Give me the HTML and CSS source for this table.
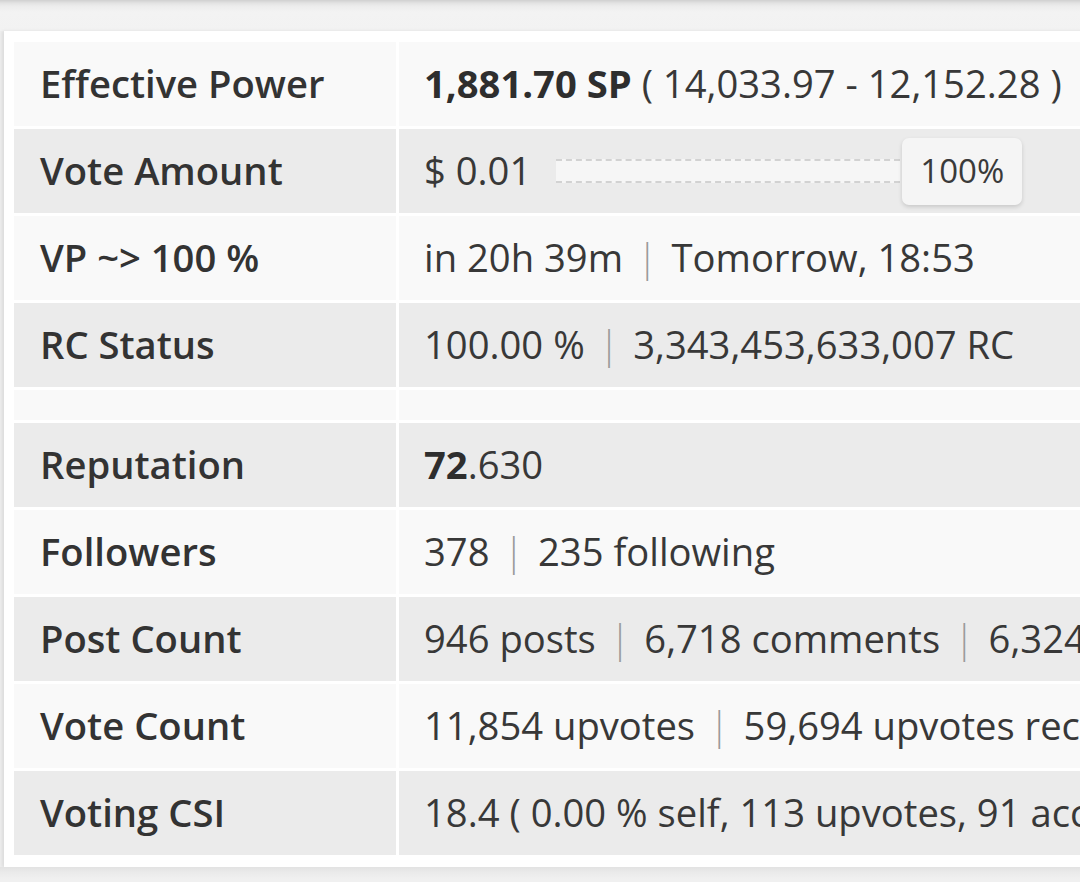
FILE: index.html
```html
<!DOCTYPE html>
<html>
<head>
<meta charset="utf-8">
<link rel="stylesheet" href="styles.css">
</head>
<body>
<div class="prev"></div>
<div class="card">
  <table class="stats">
    <tr><td class="label">Effective Power</td><td class="val"><b>1,881.70 SP</b> ( 14,033.97 - 12,152.28 )</td></tr>
    <tr><td class="label">Vote Amount</td><td class="val"><div class="vote"><span>$ 0.01</span><div class="slider"><div class="track"></div><div class="handle">100%</div></div></div></td></tr>
    <tr><td class="label">VP ~&gt; 100 %</td><td class="val">in 20h 39m <span class="sep">|</span> Tomorrow, 18:53</td></tr>
    <tr><td class="label">RC Status</td><td class="val">100.00 % <span class="sep">|</span> 3,343,453,633,007 RC</td></tr>
    <tr class="empty"><td></td><td></td></tr>
    <tr><td class="label">Reputation</td><td class="val"><b>72</b>.630</td></tr>
    <tr><td class="label">Followers</td><td class="val">378 <span class="sep">|</span> 235 following</td></tr>
    <tr><td class="label">Post Count</td><td class="val">946 posts <span class="sep">|</span> 6,718 comments <span class="sep">|</span> 6,324 replies</td></tr>
    <tr><td class="label">Vote Count</td><td class="val">11,854 upvotes <span class="sep">|</span> 59,694 upvotes received</td></tr>
    <tr><td class="label">Voting CSI</td><td class="val">18.4 ( 0.00 % self, 113 upvotes, 91 accounts, last 7d )</td></tr>
  </table>
</div>
<div class="after"></div>
</body>
</html>
```

FILE: styles.css
```css
html, body {
  margin: 0;
  padding: 0;
}
body {
  background: #eeeeee;
  overflow: hidden;
  width: 1080px;
  height: 882px;
  font-family: "Open Sans", "Noto Sans", sans-serif;
  color: #333;
}
.prev {
  height: 31px;
  background: linear-gradient(#d0d0d0 0px, #e2e2e2 3px, #ececec 6px, #f3f3f3 12px, #f2f2f2 31px);
}
.card {
  margin-left: 4px;
  width: 1500px;
  background: #fff;
  padding: 8px 0 9px 7px;
  box-shadow: -2px 0 3px rgba(0,0,0,0.08);
}
.after {
  height: 20px;
  background: linear-gradient(#e2e2e2 0px, #eaeaea 5px, #f0f0f0 12px);
}
.stats {
  border-collapse: separate;
  border-spacing: 3px;
  font-size: 38.2px;
}
.stats tr:nth-child(odd) td {
  background: #f9f9f9;
}
.stats tr:nth-child(even) td {
  background: #ebebeb;
}
.stats td {
  height: 84px;
  padding: 0 0 0 26px;
  box-sizing: border-box;
  vertical-align: middle;
  white-space: nowrap;
  line-height: 1.2;
}
.stats td.label {
  width: 382px;
  font-weight: 600;
  color: #333;
}
.stats td.val {
  width: 1100px;
  padding-left: 25px;
  color: #383838;
}
.stats tr.empty td {
  height: 30px;
}
.stats b {
  font-weight: 700;
  color: #2e2e2e;
}
.sep {
  color: #9a9a9a;
  font-weight: 300;
  margin: 0 4px;
}
.vote {
  display: flex;
  align-items: center;
}
.slider {
  display: flex;
  align-items: center;
  margin-left: 25px;
}
.track {
  width: 344px;
  height: 20px;
  background: #f6f6f6;
  border-top: 2px dashed #d2d2d2;
  border-bottom: 2px dashed #d2d2d2;
}
.handle {
  width: 120px;
  height: 67px;
  margin-left: 2px;
  background: #f5f5f5;
  border-radius: 7px;
  box-shadow: 0 2px 4px rgba(0,0,0,0.15);
  display: flex;
  align-items: center;
  justify-content: center;
  font-size: 33px;
  color: #3a3a3a;
}
```
